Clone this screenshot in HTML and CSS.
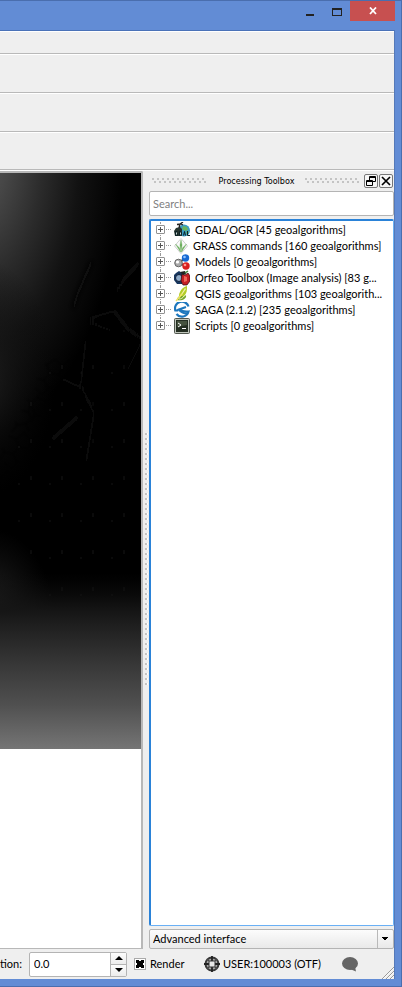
FILE: index.html
```html
<!DOCTYPE html>
<html lang="en">
<head>
<meta charset="utf-8">
<title>Processing Toolbox</title>
<link rel="stylesheet" href="styles.css">
</head>
<body>
<div class="window">
  <header class="titlebar">
    <button class="win-btn" aria-label="Minimize"><svg width="10" height="12"><path d="M1 9h8v2H1z" fill="#222"/></svg></button>
    <button class="win-btn" aria-label="Maximize"><svg width="10" height="12"><path d="M0 3h10v8H0zM1 5v5h8V5z" fill="#222" fill-rule="evenodd"/></svg></button>
    <button class="win-btn win-close" aria-label="Close"><svg width="8" height="8"><path d="M1 .5l6 6.5M7 .5L1 7" stroke="#fff" stroke-width="1.8"/></svg></button>
  </header>
  <div class="client">
    <div class="bar menu-bar"></div>
    <div class="bar"></div>
    <div class="bar"></div>
    <div class="bar bar-last"></div>
    <main class="workspace">
      <section class="canvas">
        <svg class="raster" viewBox="0 0 141 576" preserveAspectRatio="none" aria-hidden="true">
          <defs>
            <radialGradient id="g1" gradientUnits="userSpaceOnUse" cx="0" cy="0" r="1" gradientTransform="translate(-22 -20) scale(145 280)">
              <stop offset="0" stop-color="#585858"/><stop offset=".2" stop-color="#474747"/><stop offset=".45" stop-color="#2b2b2b"/><stop offset=".7" stop-color="#121212"/><stop offset="1" stop-color="#000"/>
            </radialGradient>
            <radialGradient id="g2" gradientUnits="userSpaceOnUse" cx="0" cy="0" r="1" gradientTransform="translate(-20 205) scale(76 120)">
              <stop offset="0" stop-color="#202020"/><stop offset="1" stop-color="#080808" stop-opacity="0"/>
            </radialGradient>
            <linearGradient id="g3" x1="0" y1="0" x2="0" y2="1">
              <stop offset="0" stop-color="#0c0c0c" stop-opacity="0"/><stop offset=".22" stop-color="#161616"/><stop offset=".5" stop-color="#353535"/><stop offset=".75" stop-color="#505050"/><stop offset="1" stop-color="#757575"/>
            </linearGradient>
            <radialGradient id="g4" gradientUnits="userSpaceOnUse" cx="0" cy="0" r="1" gradientTransform="translate(-12 445) scale(66 90)">
              <stop offset="0" stop-color="#2c2c2c"/><stop offset="1" stop-color="#1c1c1c" stop-opacity="0"/>
            </radialGradient>
            <filter id="soft" x="-20%" y="-20%" width="140%" height="140%"><feGaussianBlur stdDeviation="2.5"/></filter>
            <filter id="fine"><feGaussianBlur stdDeviation=".8"/></filter>
            <pattern id="cells" width="31" height="37" patternUnits="userSpaceOnUse">
              <path d="M0 8l7-5 9 4 3 8-6 7-9-2zM16 7l8-6 7 7-3 9-9-2M13 22l4 8 9-1 5-7-3-5M17 30l-5 7M26 29l3 8M4 20l-4 8M7 3V0M24 1V0M4 30l8 7" fill="none" stroke="#0a0a0a"/>
            </pattern>
          </defs>
          <path d="M0 0h141v576H0z" fill="#000"/>
          <path d="M0 0h141v330H0z" fill="url(#g1)"/>
          <path d="M0 80h80v250H0z" fill="url(#g2)"/>
          <path d="M45 190l96-40v275H40L0 350v-70z" fill="url(#cells)" filter="url(#fine)"/>
          <g filter="url(#soft)" fill="none" stroke="#0b0b0b" stroke-width="4">
            <path d="M141 88l-16 17-9 14M92 88l-14 32-5 16M90 145l24-7 14 18 14 10M88 149l24 9M86 165l-5 45M141 170l-14 28"/>
            <path d="M60 205l22 10 12 25-8 50M50 268l30-26"/>
          </g>
          <path d="M0 350h80v200H0z" fill="url(#g4)"/>
          <path d="M0 400h141v176H0z" fill="url(#g3)"/>
        </svg>
      </section>
      <div class="splitter"></div>
      <aside class="dock">
        <div class="dock-title">
          <span class="grip"></span>
          <h1>Processing Toolbox</h1>
          <span class="grip"></span>
          <div class="dock-buttons">
            <button aria-label="Float"><svg width="12" height="12"><path d="M4.500 1.500h6v5h-6zM4.500 2.500h6M1.500 5.500h6v5h-6zM1.500 6.500h6" fill="#f4f4f4" stroke="#000"/></svg></button>
            <button aria-label="Close panel"><svg width="12" height="12"><path d="M2 2l8 8M10 2l-8 8" stroke="#000" stroke-width="1.700"/></svg></button>
          </div>
        </div>
        <input class="search" type="text" placeholder="Search..." aria-label="Search">
        <ul class="tree">
          <li><button class="expander" aria-label="Expand"></button>
            <svg class="icon" viewBox="0 0 16 16"><circle cx="10" cy="8.500" r="6" fill="#3a9cc4"/><path d="M9 4l4 1 1 3-3 1-3-2zM12 10l3-1-2 4z" fill="#6ab35c"/><path d="M0 9l2-3 4-1 2 2v7H1z" fill="#26352f"/><path d="M5 6l1-4M3 2.500l4-.5 2 1M6 2l3-2" stroke="#222" stroke-width="1.300" fill="none"/><path d="M3.500 9.500h-2v4h2v-2M5.500 9.500v4l2-1v-2zM9.500 13.500l1-4 1 4M13.500 9v4.500H16" stroke="#0c2326" fill="none"/><path d="M2.500 10.500v2M6.500 10.500v2" stroke="#c9d6d6"/></svg>
            <span>GDAL/OGR [45 geoalgorithms]</span></li>
          <li class="snug"><button class="expander" aria-label="Expand"></button>
            <svg class="icon icon-narrow" viewBox="1 0 14 16"><path d="M8 .5L14.500 8 8 15.500 1.500 8z" fill="#fafafa" stroke="#cfcfcf"/><path d="M8 14L7 7l1-5 1 5zM7.500 14L2.500 6l4 4zM8.500 14l5-8-4 4z" fill="#58a448" stroke="#80b974" stroke-width=".5"/></svg>
            <span>GRASS commands [160 geoalgorithms]</span></li>
          <li><button class="expander" aria-label="Expand"></button>
            <svg class="icon" viewBox="0 0 16 16"><path d="M5 9l6-5M5 9l7 3" stroke="#444" stroke-width="2"/><circle cx="4.500" cy="9" r="3.800" fill="#a9a9a9" stroke="#666"/><circle cx="3.500" cy="8" r="1.600" fill="#fff"/><circle cx="11.500" cy="4" r="3.700" fill="#1769d2"/><circle cx="10.500" cy="3" r="1.300" fill="#8fc1ff"/><circle cx="12" cy="12" r="3.700" fill="#d81f1f"/><circle cx="11" cy="11" r="1.300" fill="#ff9b8d"/></svg>
            <span>Models [0 geoalgorithms]</span></li>
          <li><button class="expander" aria-label="Expand"></button>
            <svg class="icon" viewBox="0 0 16 16"><path d="M2 3l3-2 3 2v11H3L0 10V5z" fill="#17365e"/><circle cx="5" cy="8" r="3.500" fill="#8faac7" stroke="#0b1c38"/><path d="M8 4l3 1 3-2 2 3v5l-3 4H9l-2-4z" fill="#c51f24" stroke="#2b0a10" stroke-width=".7"/><path d="M10 6l3 1v4l-3 1z" fill="#ef665b"/><path d="M6 2l5-1 1 3-3 1z" fill="#222"/><path d="M11 3l3-2" stroke="#3b833b" stroke-width="1.500"/></svg>
            <span>Orfeo Toolbox (Image analysis) [83 g...</span></li>
          <li><button class="expander" aria-label="Expand"></button>
            <svg class="icon" viewBox="0 0 16 16"><path d="M5 9c1-5 4-8 8-9 0 4 0 7-3 10l-5 3z" fill="#b3cc28"/><path d="M6 10l5-8 1 1-5 7z" fill="#f3f0aa"/><path d="M3 14c0-3 3-5 5-4s3 0 4-1c1 4-4 6-9 5z" fill="#75a727"/><path d="M5 13c2 0 4-1 5-3" stroke="#e9f0c0" fill="none"/><path d="M2 15l6-7" stroke="#f5e567" stroke-width="1.500"/></svg>
            <span>QGIS geoalgorithms [103 geoalgorith...</span></li>
          <li><button class="expander" aria-label="Expand"></button>
            <svg class="icon" viewBox="0 0 16 16"><g fill="none" stroke="#1d77bd" stroke-width="2.200"><path d="M14.500 4.500A6.800 6.800 0 0 0 1.300 8.500h3"/><path d="M2.500 12a6.800 6.800 0 0 0 12-2.500C11 10 9 10 5 7.500l7-2.500"/><path d="M5 7.500c2 3 4 4 8 4"/></g></svg>
            <span>SAGA (2.1.2) [235 geoalgorithms]</span></li>
          <li><button class="expander" aria-label="Expand"></button>
            <svg class="icon" viewBox="0 0 16 16"><rect x=".5" y=".5" width="15" height="15" rx="1" fill="#bfc5bb" stroke="#50564e"/><path d="M2 2h12v12H2z" fill="#242e22"/><path d="M3 3h10v4L3 9z" fill="#46533f"/><path d="M4 5l3 2-3 2M8 10.500h4" fill="none" stroke="#fff"/></svg>
            <span>Scripts [0 geoalgorithms]</span></li>
        </ul>
        <select class="mode" aria-label="Interface mode"><option>Advanced interface</option></select>
      </aside>
    </main>
    <footer class="statusbar">
      <label class="rot-label" for="rotation">tion:</label>
      <div class="spin">
        <input id="rotation" type="text" value="0.0">
        <div class="spin-buttons">
          <button aria-label="Increase"><svg width="8" height="4"><path d="M0 4l4-4 4 4z"/></svg></button>
          <button aria-label="Decrease"><svg width="8" height="4"><path d="M0 0h8L4 4z"/></svg></button>
        </div>
      </div>
      <label class="render"><input type="checkbox" checked>Render</label>
      <button class="crs"><svg width="16" height="16" viewBox="0 0 16 16"><circle cx="8" cy="8" r="6.500" fill="#a9a9a9" stroke="#383838" stroke-width="2"/><path d="M8 0v16M0 8h16" stroke="#222" stroke-width="1.800"/><path d="M5 5h6v6H5z" fill="#e8e8e8" stroke="#333"/><path d="M5 5L3 3M11 5l2-2M5 11l-2 2M11 11l2 2" stroke="#444"/></svg>USER:100003 (OTF)</button>
      <button class="messages" aria-label="Messages"><svg width="18" height="16" viewBox="0 0 18 16"><ellipse cx="9" cy="7.500" rx="8" ry="6.500" fill="#656565"/><path d="M9 13l6 2.500-1-5z" fill="#656565"/></svg></button>
      <svg class="resize" width="12" height="12" aria-hidden="true"><path d="M0 12L12 0M4 12l8-8M8 12l4-4" stroke="#999"/><path d="M1 12L12 1M5 12l7-7M9 12l3-3" stroke="#fff" stroke-width=".7"/></svg>
    </footer>
  </div>
</div>
</body>
</html>
```
FILE: styles.css
```css
* { box-sizing: border-box; }

body {
  margin: 0;
  font: 11px/16px Lato, "Noto Sans", sans-serif;
  color: #000;
}

button, input, select {
  margin: 0;
  padding: 0;
  border: 0;
  border-radius: 0;
  background: none;
  font: inherit;
  color: inherit;
}

svg { display: block; flex: none; }

.window {
  display: flex;
  flex-direction: column;
  min-height: 100vh;
  padding-right: 6px;
  padding-bottom: 7px;
  background: #628cd5;
  border: solid #4a6eae;
  border-width: 1px 1px 1px 0;
}

.titlebar {
  display: flex;
  justify-content: flex-end;
  height: 29px;
}

.win-btn {
  display: flex;
  justify-content: center;
  align-items: center;
  width: 27px;
  height: 20px;
}

.win-close {
  width: 45px;
  background: #c75050;
}

.client {
  flex: 1;
  display: flex;
  flex-direction: column;
  background: #efefef;
  border-top: 1px solid #4a72b8;
  border-right: 1px solid #5579b8;
}

.bar {
  height: 39px;
  border-top: 1px solid #fff;
  border-bottom: 1px solid #b9b9b9;
}

.menu-bar { height: 23px; }
.bar-last { height: 38px; }

.workspace {
  flex: 1;
  display: flex;
  border-top: 1px solid #fff;
}

.canvas {
  flex: 1;
  background: #fff;
  border: solid #b8b8b8;
  border-width: 2px 2px 1px 0;
  border-top-right-radius: 2px;
}

.raster { width: 100%; height: 576px; }

.splitter {
  align-self: center;
  width: 3px;
  height: 255px;
  margin: 0 1px 0 2px;
  background:
    linear-gradient(#c4c4c4, #c4c4c4) 0 0 / 2px 5px repeat-y,
    #fff;
  mask: repeating-linear-gradient(#000 0 2px, transparent 2px 5px);
}

.dock {
  flex: none;
  display: flex;
  flex-direction: column;
  width: 245px;
}

.dock-title {
  display: flex;
  align-items: center;
  height: 20px;
  padding: 0 1px 1px 3px;
}

.dock-title h1 {
  margin: 0 11px 0 12px;
  font: 9px/16px "DejaVu Sans Condensed", "Noto Sans", sans-serif;
  white-space: nowrap;
}

.grip {
  flex: 1;
  height: 5px;
  background:
    radial-gradient(circle at 1px 1px, #c4c4c4 1px, transparent 1px) 0 0 / 5px 5px,
    radial-gradient(circle at 3px 4px, #c4c4c4 1px, transparent 1px) 0 0 / 5px 5px;
}

.dock-buttons { display: flex; gap: 1px; margin-left: 4px; }

.dock-buttons button {
  display: grid;
  place-items: center;
  width: 14px;
  height: 14px;
  background: #f6f6f6;
  border: 1px solid #777;
  border-radius: 2px;
}

.search {
  width: 100%;
  height: 25px;
  margin-bottom: 3px;
  padding: 0 3px;
  background: #fff;
  border: 1px solid #b4b4b4;
  border-radius: 2px;
}

.search::placeholder { color: #808080; opacity: 1; }

.tree {
  flex: 1;
  margin: 0 0 3px;
  padding: 1px 4px;
  list-style: none;
  background: #fff;
  border: 1px solid #6ab0f5;
  border-top: 2px solid #2a82d8;
  border-left: 2px solid #2a82d8;
  border-radius: 2px;
}

.tree li {
  position: relative;
  display: flex;
  align-items: center;
  gap: 5px;
  height: 16px;
  white-space: nowrap;
}

.tree li::before {
  content: "";
  position: absolute;
  left: 5px;
  top: 0;
  height: 16px;
  border-left: 1px dotted #999;
}

.tree li:last-child::before { height: 7px; }

.expander {
  position: relative;
  flex: none;
  width: 9px;
  height: 9px;
  margin: 0 4px 2px 1px;
  background:
    linear-gradient(#555, #555) center / 5px 1px no-repeat,
    linear-gradient(#555, #555) center / 1px 5px no-repeat,
    #fff;
  border: 1px solid #919191;
  border-radius: 1px;
}

.expander::after {
  content: "";
  position: absolute;
  left: 9px;
  top: 3px;
  width: 5px;
  border-top: 1px dotted #999;
}

.icon { width: 16px; height: 16px; }
.icon-narrow { width: 14px; }

.mode {
  appearance: none;
  width: 100%;
  height: 20px;
  padding: 0 3px;
  border: 1px solid #b4b4b4;
  border-radius: 2px;
  background:
    linear-gradient(to bottom left, #000 50%, transparent 50%) right 8px center / 4px 4px no-repeat,
    linear-gradient(to bottom right, #000 50%, transparent 50%) right 4px center / 4px 4px no-repeat,
    linear-gradient(#b9b9b9, #b9b9b9) right 15px center / 1px 100% no-repeat,
    linear-gradient(#fcfcfc, #e9e9e9);
}

.statusbar {
  display: flex;
  align-items: center;
  height: 30px;
}

.rot-label { width: 29px; }

.spin {
  display: flex;
  width: 98px;
  height: 25px;
  background: #fff;
  border: 1px solid #b4b4b4;
  border-radius: 2px;
}

.spin input { flex: 1; min-width: 0; padding-left: 4px; }

.spin-buttons { display: flex; flex-direction: column; width: 16px; }

.spin-buttons button {
  flex: 1;
  display: grid;
  place-items: center;
  background: linear-gradient(#fcfcfc, #ececec);
  border-left: 1px solid #b4b4b4;
}

.spin-buttons button + button { border-top: 1px solid #b4b4b4; }

.render { display: flex; align-items: center; gap: 4px; width: 70px; margin-left: 7px; }

.render input {
  appearance: none;
  width: 12px;
  height: 12px;
  border: 1px solid #aaa;
  background: #fff;
}

.render input:checked {
  background:
    linear-gradient(45deg, transparent 35%, #000 35% 65%, transparent 65%) center / 8px 8px no-repeat,
    linear-gradient(-45deg, transparent 35%, #000 35% 65%, transparent 65%) center / 8px 8px no-repeat,
    #fff;
}

.crs { display: flex; align-items: center; gap: 3px; white-space: nowrap; }

.messages { margin-left: 20px; }

.resize { align-self: flex-end; margin-left: auto; }
```
